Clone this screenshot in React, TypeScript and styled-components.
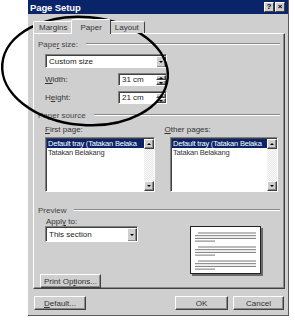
import styled, { createGlobalStyle } from "styled-components";

const GlobalStyle = createGlobalStyle`
  body {
    margin: 0;
    background: #ffffff;
    font-family: "Liberation Sans", Arial, sans-serif;
    font-size: 8px;
    color: #1a1a1a;
  }
`;

const face = "#cfcfcf";
const navy = "#0a246a";

const Page = styled.div`
  position: relative;
  width: 295px;
  height: 320px;
  padding-left: 28px;
  box-sizing: border-box;
  overflow: hidden;
`;

const Dialog = styled.div`
  width: 261px;
  height: 316px;
  background: ${face};
  display: flex;
  flex-direction: column;
  box-sizing: border-box;
  border-right: 1px solid #5a5a5a;
  border-bottom: 1px solid #5a5a5a;
`;

const TitleBar = styled.div`
  height: 14px;
  background: ${navy};
  display: flex;
  align-items: center;
  padding: 0 3px 0 2px;
  gap: 1px;
`;

const Title = styled.div`
  flex: 1;
  color: #fff;
  font-weight: bold;
  font-size: 9.5px;
  letter-spacing: -0.1px;
`;

const CaptionButton = styled.div`
  width: 10px;
  height: 10px;
  background: ${face};
  border: 1px solid;
  border-color: #fff #404040 #404040 #fff;
  box-sizing: border-box;
  display: flex;
  align-items: center;
  justify-content: center;
  font-size: 8px;
  font-weight: bold;
  line-height: 1;
  color: #000;
`;

const Body = styled.div`
  flex: 1;
  display: flex;
  flex-direction: column;
  padding: 5px 4px 0 5px;
`;

const TabRow = styled.div`
  display: flex;
  align-items: flex-end;
  height: 14px;
  position: relative;
  z-index: 1;
`;

const Tab = styled.div<{ $active?: boolean }>`
  height: ${(p) => (p.$active ? 15 : 12)}px;
  margin: ${(p) => (p.$active ? "0 -2px -1px" : "0")};
  padding: ${(p) => (p.$active ? "0 8px" : "0 5px")};
  background: ${face};
  border: 1px solid;
  border-bottom: none;
  border-color: #fff #404040 transparent #fff;
  border-radius: 2px 2px 0 0;
  display: flex;
  align-items: center;
  box-sizing: border-box;
  color: #333;
  position: relative;
  z-index: ${(p) => (p.$active ? 2 : 1)};
`;

const Panel = styled.div`
  width: 252px;
  height: 256px;
  box-sizing: border-box;
  border: 1px solid;
  border-color: #fff #404040 #404040 #fff;
  box-shadow: inset -1px -1px #8a8a8a;
  display: flex;
  flex-direction: column;
`;

const GroupHeader = styled.div<{ $top: number }>`
  display: flex;
  align-items: center;
  height: 10px;
  margin: ${(p) => p.$top}px 4px 0 4px;
  color: #444;
  &::after {
    content: "";
    flex: 1;
    margin-left: 8px;
    border-top: 1px solid #8a8a8a;
    border-bottom: 1px solid #fff;
  }
`;

const Key = styled.span`
  text-decoration: underline;
`;

const Field = styled.div<{ $w: number; $h: number }>`
  width: ${(p) => p.$w}px;
  height: ${(p) => p.$h}px;
  box-sizing: border-box;
  background: #fff;
  border: 1px solid;
  border-color: #808080 #fff #fff #808080;
  box-shadow: inset 1px 1px #404040;
  display: flex;
  align-items: stretch;
  overflow: hidden;
`;

const FieldText = styled.div`
  flex: 1;
  padding-left: 3px;
  display: flex;
  align-items: center;
  white-space: nowrap;
`;

const SmallButton = styled.div`
  background: ${face};
  border: 1px solid;
  border-color: #fff #404040 #404040 #fff;
  box-shadow: inset -1px -1px #8a8a8a;
  box-sizing: border-box;
  display: flex;
  align-items: center;
  justify-content: center;
`;

const DropButton = styled(SmallButton)`
  width: 10px;
  margin: 1px 0 0;
`;

const SpinStack = styled.div`
  width: 10px;
  display: flex;
  flex-direction: column;
  margin-top: 1px;
  & > div {
    flex: 1;
  }
`;

const Arrow = styled.div<{ $up?: boolean }>`
  width: 0;
  height: 0;
  border-left: 2px solid transparent;
  border-right: 2px solid transparent;
  ${(p) =>
    p.$up
      ? "border-bottom: 2px solid #000;"
      : "border-top: 2px solid #000;"}
`;

const Combo = styled(Field)`
  margin: 5px 0 0 11px;
`;

const SizeRow = styled.div`
  display: flex;
  align-items: center;
  margin: 5px 0 0 11px;
`;

const RowLabel = styled.div`
  width: 73px;
  color: #333;
`;

const SourceLabels = styled.div`
  display: flex;
  height: 10px;
  align-items: center;
  margin: 4px 0 0 11px;
  color: #333;
`;

const SourceLabel = styled.div`
  width: 125px;
`;

const Lists = styled.div`
  display: flex;
  gap: 15px;
  margin: 3px 0 0 11px;
`;

const ListItems = styled.div`
  flex: 1;
  display: flex;
  flex-direction: column;
  padding: 1px 0 0 1px;
  overflow: hidden;
`;

const ListItem = styled.div<{ $selected?: boolean }>`
  height: 9px;
  line-height: 9px;
  padding-left: 1px;
  white-space: nowrap;
  font-size: 7.5px;
  letter-spacing: -0.2px;
  background: ${(p) => (p.$selected ? navy : "transparent")};
  color: ${(p) => (p.$selected ? "#fff" : "#333")};
`;

const ScrollBar = styled.div`
  width: 10px;
  display: flex;
  flex-direction: column;
  background: repeating-conic-gradient(#e8e8e8 0 25%, #fafafa 0 50%) 0 0 / 2px 2px;
  margin-top: 1px;
`;

const ScrollButton = styled(SmallButton)`
  height: 10px;
`;

const Track = styled.div`
  flex: 1;
`;

const PreviewArea = styled.div`
  display: flex;
  margin: 2px 0 0 6px;
  height: 71px;
`;

const PreviewLeft = styled.div`
  width: 150px;
  display: flex;
  flex-direction: column;
`;

const ApplyLabel = styled.div`
  height: 9px;
  line-height: 9px;
  margin-left: 6px;
  color: #333;
`;

const ApplyCombo = styled(Field)`
  margin-left: 5px;
`;

const PushButton = styled.div<{ $w: number }>`
  width: ${(p) => p.$w}px;
  height: 14px;
  box-sizing: border-box;
  background: ${face};
  border: 1px solid;
  border-color: #fff #404040 #404040 #fff;
  box-shadow: inset -1px -1px #8a8a8a;
  display: flex;
  align-items: center;
  justify-content: center;
  color: #333;
`;

const PrintButton = styled(PushButton)`
  margin-top: auto;
`;

const PaperPreview = styled.div`
  width: 71px;
  height: 48px;
  margin-top: 9px;
  box-sizing: border-box;
  background: #fff;
  border: 1px solid #222;
  box-shadow: 2px 2px 0 #6a6a6a;
  display: flex;
`;

const Footer = styled.div`
  display: flex;
  align-items: center;
  margin-top: 7px;
  padding-left: 1px;
  gap: 5px;
`;

const Spacer = styled.div`
  flex: 1;
`;

function DropDown({ h, text }: { h: number; text: string }) {
  return (
    <>
      <FieldText>{text}</FieldText>
      <DropButton style={{ height: h - 2 }}>
        <Arrow />
      </DropButton>
    </>
  );
}

function Spin({ text }: { text: string }) {
  return (
    <Field $w={49} $h={13}>
      <FieldText>{text}</FieldText>
      <SpinStack>
        <SmallButton>
          <Arrow $up />
        </SmallButton>
        <SmallButton>
          <Arrow />
        </SmallButton>
      </SpinStack>
    </Field>
  );
}

function SourceList({ w }: { w: number }) {
  return (
    <Field $w={w} $h={55}>
      <ListItems>
        <ListItem $selected>Default tray (Tatakan Belaka</ListItem>
        <ListItem>Tatakan Belakang</ListItem>
      </ListItems>
      <ScrollBar>
        <ScrollButton>
          <Arrow $up />
        </ScrollButton>
        <Track />
        <ScrollButton>
          <Arrow />
        </ScrollButton>
      </ScrollBar>
    </Field>
  );
}

function PreviewLines() {
  const groups = [6, 20, 34];
  return (
    <svg width="69" height="46" viewBox="0 0 69 46">
      {groups.map((y) => (
        <g key={y} stroke="#555" strokeWidth="0.8">
          <line x1="7" y1={y} x2="65" y2={y} />
          <line x1="4" y1={y + 2.7} x2="65" y2={y + 2.7} />
          <line x1="4" y1={y + 5.4} x2="65" y2={y + 5.4} />
          <line x1="4" y1={y + 8.1} x2="24" y2={y + 8.1} />
        </g>
      ))}
    </svg>
  );
}

const Circle = styled.svg`
  position: absolute;
  left: 0;
  top: 0;
  pointer-events: none;
`;

function App() {
  return (
    <Page>
      <GlobalStyle />
      <Dialog>
        <TitleBar>
          <Title>Page Setup</Title>
          <CaptionButton>?</CaptionButton>
          <CaptionButton>×</CaptionButton>
        </TitleBar>
        <Body>
          <TabRow>
            <Tab>Margins</Tab>
            <Tab $active>Paper</Tab>
            <Tab>Layout</Tab>
          </TabRow>
          <Panel>
            <GroupHeader $top={5}>
              Pape<Key>r</Key>&nbsp;size:
            </GroupHeader>
            <Combo $w={122} $h={14}>
              <DropDown h={14} text="Custom size" />
            </Combo>
            <SizeRow>
              <RowLabel>
                <Key>W</Key>idth:
              </RowLabel>
              <Spin text="31 cm" />
            </SizeRow>
            <SizeRow>
              <RowLabel>
                H<Key>e</Key>ight:
              </RowLabel>
              <Spin text="21 cm" />
            </SizeRow>
            <GroupHeader $top={6}>Paper source</GroupHeader>
            <SourceLabels>
              <SourceLabel>
                <Key>F</Key>irst page:
              </SourceLabel>
              <SourceLabel>
                <Key>O</Key>ther pages:
              </SourceLabel>
            </SourceLabels>
            <Lists>
              <SourceList w={110} />
              <SourceList w={108} />
            </Lists>
            <GroupHeader $top={13}>Preview</GroupHeader>
            <PreviewArea>
              <PreviewLeft>
                <ApplyLabel>
                  Appl<Key>y</Key> to:
                </ApplyLabel>
                <ApplyCombo $w={93} $h={16}>
                  <DropDown h={16} text="This section" />
                </ApplyCombo>
                <PrintButton $w={61}>
                  Print Op<Key>t</Key>ions...
                </PrintButton>
              </PreviewLeft>
              <PaperPreview>
                <PreviewLines />
              </PaperPreview>
            </PreviewArea>
          </Panel>
          <Footer>
            <PushButton $w={52}>
              <Key>D</Key>efault...
            </PushButton>
            <Spacer />
            <PushButton $w={53}>OK</PushButton>
            <PushButton $w={51}>Cancel</PushButton>
          </Footer>
        </Body>
      </Dialog>
      <Circle width="295" height="320" viewBox="0 0 295 320">
        <ellipse
          cx="85"
          cy="71"
          rx="83"
          ry="54"
          transform="rotate(5 85 71)"
          fill="none"
          stroke="#000"
          strokeWidth="2.5"
        />
      </Circle>
    </Page>
  );
}

export default App;
